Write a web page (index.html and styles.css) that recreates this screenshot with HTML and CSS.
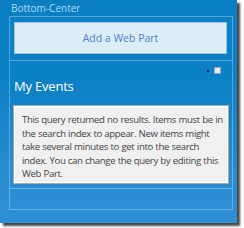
FILE: index.html
```html
<!DOCTYPE html>
<html>
<head>
<meta charset="utf-8">
<link rel="stylesheet" href="styles.css">
</head>
<body>
<div class="frame">
  <div class="zone-title">Bottom-Center</div>
  <div class="zone">
    <div class="add-wrap">
      <div class="add-btn">Add a Web Part</div>
    </div>
    <div class="webpart">
      <div class="wp-tools">
        <span class="wp-menu"></span>
        <span class="wp-check"></span>
      </div>
      <div class="wp-title">My Events</div>
      <div class="wp-message">This query returned no results. Items must be in the search index to appear. New items might take several minutes to get into the search index. You can change the query by editing this Web Part.</div>
    </div>
  </div>
</div>
</body>
</html>
```
FILE: styles.css
```css
html, body {
  margin: 0;
  padding: 0;
  background: #ffffff;
}
body {
  width: 244px;
  height: 228px;
  overflow: hidden;
  font-family: "Open Sans", "Noto Sans", sans-serif;
}
.frame {
  width: 237px;
  height: 223px;
  box-sizing: border-box;
  background: linear-gradient(to bottom, #0a7fc4 0%, #0b80c5 35%, #2a8dd2 80%, #2d8fd4 100%);
  box-shadow: 3px 3px 2px rgba(40, 40, 40, 0.85);
  padding-top: 1px;
}
.zone-title {
  height: 15px;
  padding-left: 11px;
  font-size: 10px;
  line-height: 14px;
  color: #b3d9f0;
}
.zone {
  margin-left: 9px;
  width: 224px;
  height: 194px;
  box-sizing: border-box;
  border: 1px solid rgba(255, 255, 255, 0.3);
}
.add-wrap {
  padding: 5px 5px 6px 4px;
}
.add-btn {
  height: 32px;
  box-sizing: border-box;
  border: 1px solid #9cc3de;
  background: #dbedf7;
  color: #4b82c9;
  font-size: 10.5px;
  display: flex;
  align-items: center;
  justify-content: center;
}
.webpart {
  border-top: 1px solid rgba(255, 255, 255, 0.3);
  border-bottom: 1px solid rgba(255, 255, 255, 0.3);
  height: 129px;
  box-sizing: border-box;
  padding: 6px 3px 0 3px;
}
.wp-tools {
  display: flex;
  justify-content: flex-end;
  align-items: center;
  gap: 5px;
  height: 7px;
  padding-right: 8px;
}
.wp-menu {
  width: 2px;
  height: 2px;
  background: #1a2a3a;
  margin-top: 1px;
}
.wp-check {
  width: 7px;
  height: 7px;
  box-sizing: border-box;
  border: 1px solid #9aa5ad;
  background: #e6e8ea;
}
.wp-title {
  padding-left: 1px;
  margin-top: 3px;
  margin-bottom: 8px;
  font-size: 13px;
  line-height: 18px;
  color: #ffffff;
  height: 20px;
  letter-spacing: -0.2px;
}
.wp-message {
  height: 79px;
  box-sizing: border-box;
  border: 1px solid #a6aaad;
  box-shadow: inset 0 0 0 1px #ffffff;
  background: #f0f0f0;
  color: #444444;
  font-size: 9.6px;
  letter-spacing: -0.35px;
  word-spacing: 0.3px;
  line-height: 13.6px;
  padding: 7px 2px 0 8px;
}
```
